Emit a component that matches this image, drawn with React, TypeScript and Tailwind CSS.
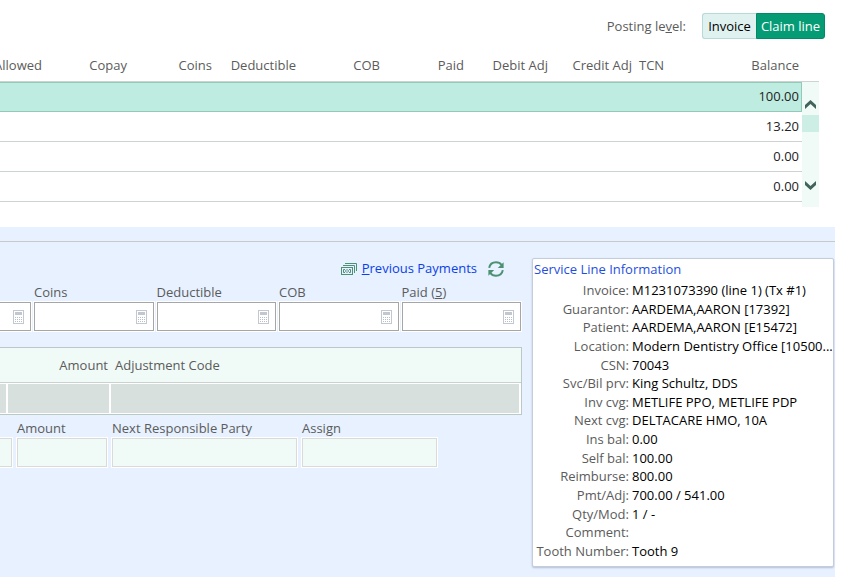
import React from "react";

const columns = ["Allowed", "Copay", "Coins", "Deductible", "COB", "Paid", "Debit Adj", "Credit Adj"];

const balances = ["100.00", "13.20", "0.00", "0.00"];

const details: [string, string][] = [
  ["Invoice:", "M1231073390 (line 1) (Tx #1)"],
  ["Guarantor:", "AARDEMA,AARON [17392]"],
  ["Patient:", "AARDEMA,AARON [E15472]"],
  ["Location:", "Modern Dentistry Office [10500..."],
  ["CSN:", "70043"],
  ["Svc/Bil prv:", "King Schultz, DDS"],
  ["Inv cvg:", "METLIFE PPO, METLIFE PDP"],
  ["Next cvg:", "DELTACARE HMO, 10A"],
  ["Ins bal:", "0.00"],
  ["Self bal:", "100.00"],
  ["Reimburse:", "800.00"],
  ["Pmt/Adj:", "700.00 / 541.00"],
  ["Qty/Mod:", "1 / -"],
  ["Comment:", ""],
  ["Tooth Number:", "Tooth 9"],
];

function Calculator() {
  return (
    <svg width="11" height="14" viewBox="0 0 11 14" className="pointer-events-none shrink-0" aria-hidden="true">
      <rect x="0.5" y="0.5" width="10" height="13" fill="#fff" stroke="#c3c7cf" />
      <rect x="2" y="2" width="7" height="3" fill="#c3c7cf" />
      {[7, 9, 11].map((y) =>
        [2, 4, 6, 8].map((x) => <rect key={`${x}-${y}`} x={x} y={y} width="1" height="1" fill="#b9bec8" />),
      )}
    </svg>
  );
}

function Money() {
  return (
    <svg width="16" height="12" viewBox="0 0 16 12" fill="none" stroke="#4c9272" aria-hidden="true">
      <path d="M4 0.5H15.5V8" />
      <path d="M2 2.5H13.5V10" />
      <rect x="0.5" y="4.5" width="11" height="7" />
      <path d="M4 6.5H2.5V9.5H4M8 6.5H9.5V9.5H8" />
      <path d="M5.5 6.5L4.5 8L5.5 9.5M6.5 6.5L7.5 8L6.5 9.5" />
    </svg>
  );
}

function Refresh() {
  return (
    <svg width="16" height="16" viewBox="0 0 16 16" fill="none" stroke="#4c9272" strokeWidth="2" aria-hidden="true">
      <path d="M1.2 6.8C1.8 3.4 4.6 1.2 8 1.2C10.4 1.2 12.4 2.2 13.6 4" />
      <path d="M14.8 9.2C14.2 12.6 11.4 14.8 8 14.8C5.6 14.8 3.6 13.8 2.4 12" />
      <path d="M15.6 1.2V7H9.8Z" fill="#4c9272" stroke="none" />
      <path d="M0.4 14.8V9H6.2Z" fill="#4c9272" stroke="none" />
    </svg>
  );
}

function Chevron({ down = false }: { down?: boolean }) {
  return (
    <svg width="11" height="9" viewBox="0 0 11 9" aria-hidden="true">
      <path d={down ? "M0 0L5.5 5L11 0V4L5.5 9L0 4Z" : "M0 9L5.5 4L11 9V5L5.5 0L0 5Z"} fill="#40635a" />
    </svg>
  );
}

function MoneyField({ id, label }: { id: string; label: React.ReactNode }) {
  return (
    <div className="min-w-0 flex-1">
      <label htmlFor={id} className="block pb-px">{label}</label>
      <div className="flex h-[29px] items-center border border-[#a6a6a6] bg-white pr-[6px] outline outline-1 outline-white">
        <input id={id} type="text" className="h-full min-w-0 flex-1 bg-transparent px-1 outline-none" />
        <Calculator />
      </div>
    </div>
  );
}

function PlainField({ id, label, width }: { id: string; label: string; width: string }) {
  return (
    <div className={width}>
      <label htmlFor={id} className="block pb-px whitespace-nowrap">{label}</label>
      <input
        id={id}
        type="text"
        className="block h-[29px] w-full border border-[#dadada] bg-[#f0faf7] px-1 outline outline-1 outline-white"
      />
    </div>
  );
}

export default function App() {
  return (
    <div className="min-h-screen overflow-hidden bg-white pr-2 font-['Open_Sans','Noto_Sans',sans-serif] text-[13px] leading-[18px] text-[#5b5b5b]">
      <section className="pb-5">
        <div className="flex items-center justify-end pt-[13px] pr-[10px]">
          <span id="posting" className="mr-4">
            Posting le<u>v</u>el:
          </span>
          <div role="group" aria-labelledby="posting" className="flex h-[26px]">
            <button type="button" className="w-[54px] rounded-l-[3px] border border-r-0 border-[#b9d8d8] bg-[#dff2f0] text-black">
              Invoice
            </button>
            <button type="button" aria-pressed="true" className="w-[69px] rounded-r-[3px] border border-[#008a67] bg-[#059c75] whitespace-nowrap text-white">
              Claim line
            </button>
          </div>
        </div>

        <div className="mr-4 overflow-hidden">
          <div className="flex">
            <div className="min-w-0 flex-1">
              <table className="-ml-10 w-[calc(100%+40px)] table-fixed border-separate border-spacing-0">
                <colgroup>
                  <col className="w-[85px]" />
                  <col className="w-[85px]" />
                  <col className="w-[85px]" />
                  <col className="w-[84px]" />
                  <col className="w-[84px]" />
                  <col className="w-[84px]" />
                  <col className="w-[84px]" />
                  <col className="w-[84px]" />
                  <col />
                  <col className="w-[80px]" />
                </colgroup>
                <thead>
                  <tr className="h-[43px]">
                    {columns.map((c) => (
                      <th key={c} className="border-b border-[#cdd3d1] pt-[10px] pr-[3px] text-right font-normal whitespace-nowrap">{c}</th>
                    ))}
                    <th className="border-b border-[#cdd3d1] pt-[10px] pl-1 text-left font-normal">TCN</th>
                    <th className="border-b border-[#cdd3d1] pt-[10px] pr-[3px] text-right font-normal">Balance</th>
                  </tr>
                </thead>
                <tbody className="text-[#222222]">
                  {balances.map((b, i) => (
                    <tr key={i} className="h-[30px]">
                      <td
                        colSpan={9}
                        className={i === 0 ? "border-y border-[#94c9b8] bg-[#bfece0]" : "border-b border-[#cdd3d1]"}
                      />
                      <td
                        className={
                          i === 0
                            ? "border-y border-r border-[#94c9b8] bg-[#bfece0] pr-[2px] pb-[2px] text-right"
                            : "border-b border-[#cdd3d1] pr-[3px] pb-[2px] text-right"
                        }
                      >
                        {b}
                      </td>
                    </tr>
                  ))}
                </tbody>
              </table>
            </div>
            <div className="mt-[42px] flex h-[126px] w-[17px] flex-col items-center border-t border-[#cdd3d1] bg-[#f0faf7]">
              <button type="button" aria-label="Scroll up" className="flex h-[33px] w-full items-end justify-center pb-[6px]">
                <Chevron />
              </button>
              <div className="h-[17px] w-full bg-[#cdeee4]" />
              <button type="button" aria-label="Scroll down" className="mt-auto flex h-[26px] w-full items-start justify-center">
                <Chevron down />
              </button>
            </div>
          </div>
        </div>
      </section>

      <section className="bg-[#e7f1ff] pt-[14px]">
        <div className="flex min-h-[336px] items-start gap-[10px] border-t border-[#c8c9cb] pt-4 pr-px pb-[10px]">
          <div className="min-w-0 flex-1">
            <div className="flex h-[22px] items-center justify-end gap-[5px] pr-[18px]">
              <Money />
              <a href="#payments" className="pb-[2px] text-[#0b3fe8]">
                <u>P</u>revious Payments
              </a>
              <button type="button" aria-label="Refresh" className="ml-[6px]">
                <Refresh />
              </button>
            </div>

            <div className="flex items-end gap-[3px] pt-[3px] pr-px">
              <div className="flex h-[29px] w-[31px] items-center justify-end border border-l-0 border-[#a6a6a6] bg-white pr-[6px] outline outline-1 outline-white">
                <Calculator />
              </div>
              <MoneyField id="coins" label="Coins" />
              <MoneyField id="deductible" label="Deductible" />
              <MoneyField id="cob" label="COB" />
              <MoneyField id="paid" label={<>Paid (<u>5</u>)</>} />
            </div>

            <table className="mt-4 w-full table-fixed border-separate border-spacing-0 border border-l-0 border-[#bcc8c5] bg-[#f0faf7]">
              <colgroup>
                <col className="w-[8px]" />
                <col className="w-[103px]" />
                <col />
              </colgroup>
              <thead>
                <tr className="h-[35px]">
                  <th className="border-b border-[#c9d2cf]" />
                  <th className="border-b border-[#c9d2cf] pr-[3px] text-right font-normal">Amount</th>
                  <th className="border-b border-[#c9d2cf] pl-1 text-left font-normal">Adjustment Code</th>
                </tr>
              </thead>
              <tbody>
                <tr className="h-[31px]">
                  <td className="border-y border-r-2 border-white bg-[#d8e0dd]" />
                  <td className="border-y border-r-2 border-white bg-[#d8e0dd]" />
                  <td className="border-y border-r-2 border-white bg-[#d8e0dd]" />
                </tr>
              </tbody>
            </table>

            <div className="flex items-end gap-[5px] pt-1">
              <div className="h-[29px] w-[12px] border border-l-0 border-[#dadada] bg-[#f0faf7] outline outline-1 outline-white" />
              <PlainField id="amount" label="Amount" width="w-[90px]" />
              <PlainField id="party" label="Next Responsible Party" width="w-[185px]" />
              <PlainField id="assign" label="Assign" width="w-[135px]" />
            </div>
          </div>

          <aside className="w-[302px] rounded-[2px] border border-[#c3cddb] bg-white pb-[6px] shadow-[0_1px_2px_#b4bfd0]">
            <h2 className="px-px leading-[20px] text-[#1f4fe0]">Service Line Information</h2>
            <dl className="grid min-h-[281px] grid-cols-[96px_minmax(0,1fr)] content-between gap-x-[3px] pt-[2px]">
              {details.map(([k, v]) => (
                <React.Fragment key={k}>
                  <dt className="text-right whitespace-nowrap">{k}</dt>
                  <dd className="whitespace-nowrap text-black">{v}</dd>
                </React.Fragment>
              ))}
            </dl>
          </aside>
        </div>
      </section>
    </div>
  );
}
